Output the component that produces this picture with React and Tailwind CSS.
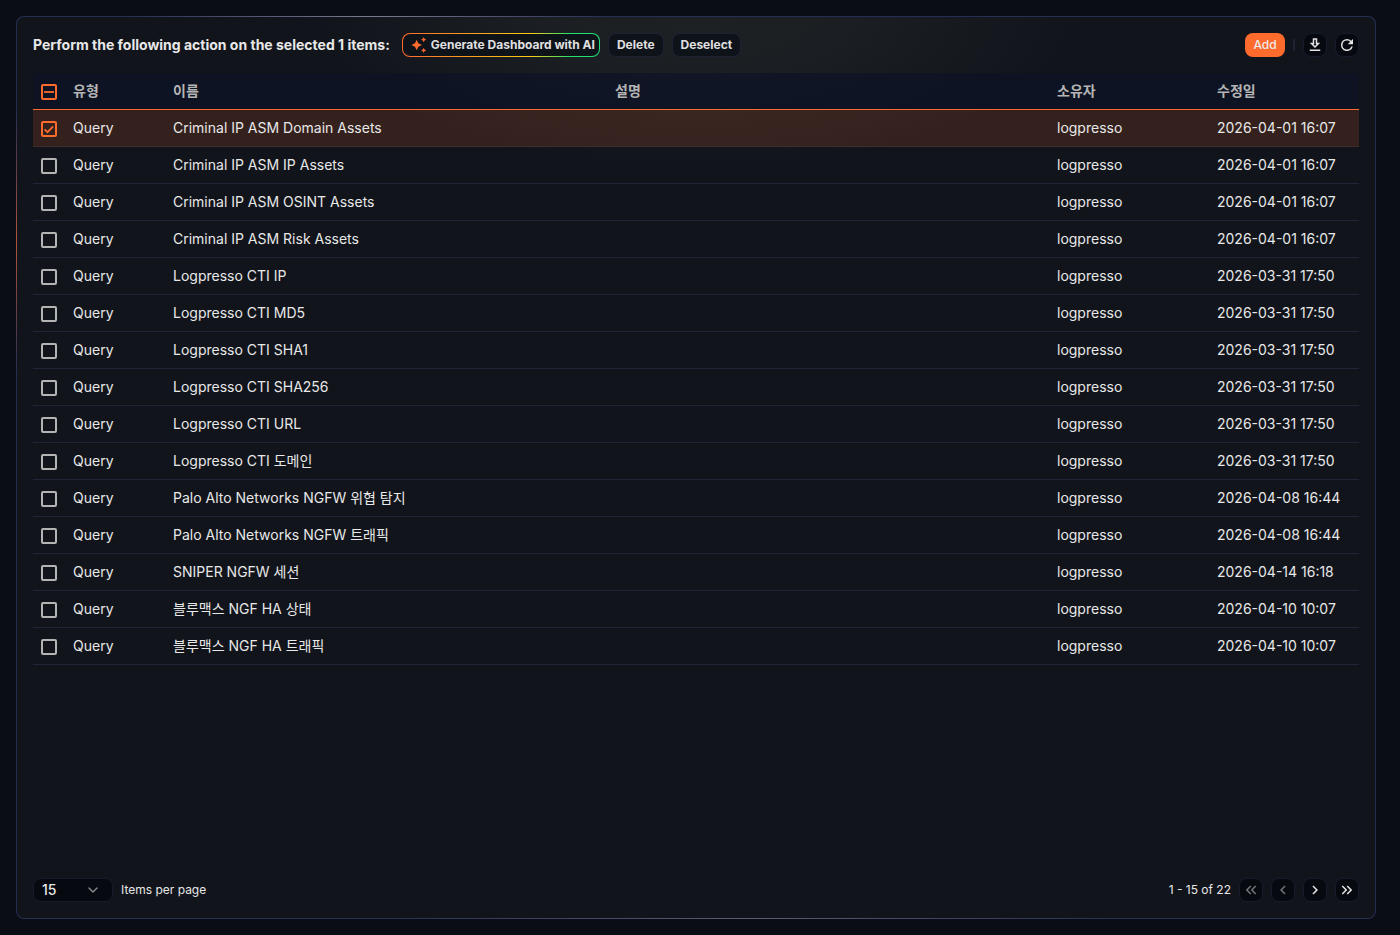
import React, { useEffect, useRef, useState } from 'react';
import clsx from 'clsx';
import { ChevronDown } from 'lucide-react';

const ROWS = [
  { id: 1, name: 'Criminal IP ASM Domain Assets', date: '2026-04-01 16:07' },
  { id: 2, name: 'Criminal IP ASM IP Assets', date: '2026-04-01 16:07' },
  { id: 3, name: 'Criminal IP ASM OSINT Assets', date: '2026-04-01 16:07' },
  { id: 4, name: 'Criminal IP ASM Risk Assets', date: '2026-04-01 16:07' },
  { id: 5, name: 'Logpresso CTI IP', date: '2026-03-31 17:50' },
  { id: 6, name: 'Logpresso CTI MD5', date: '2026-03-31 17:50' },
  { id: 7, name: 'Logpresso CTI SHA1', date: '2026-03-31 17:50' },
  { id: 8, name: 'Logpresso CTI SHA256', date: '2026-03-31 17:50' },
  { id: 9, name: 'Logpresso CTI URL', date: '2026-03-31 17:50' },
  { id: 10, name: 'Logpresso CTI 도메인', date: '2026-03-31 17:50' },
  { id: 11, name: 'Palo Alto Networks NGFW 위협 탐지', date: '2026-04-08 16:44' },
  { id: 12, name: 'Palo Alto Networks NGFW 트래픽', date: '2026-04-08 16:44' },
  { id: 13, name: 'SNIPER NGFW 세션', date: '2026-04-14 16:18' },
  { id: 14, name: '블루맥스 NGF HA 상태', date: '2026-04-10 10:07' },
  { id: 15, name: '블루맥스 NGF HA 트래픽', date: '2026-04-10 10:07' },
];

const Icon = ({ path, className }) => (
  <svg viewBox="0 0 24 24" fill="currentColor" aria-hidden="true" className={className}>
    <path d={path} />
  </svg>
);

const ICONS = {
  download: 'M19 9h-4V3H9v6H5l7 7 7-7zm-8 2V5h2v6h1.17L12 13.17 9.83 11H11zm-6 7h14v2H5v-2z',
  refresh:
    'M17.65 6.35A7.96 7.96 0 0 0 12 4a8 8 0 1 0 7.73 10h-2.08A6 6 0 1 1 12 6c1.66 0 3.14.69 4.22 1.78L13 11h7V4l-2.35 2.35z',
  first: 'M17.59 18 19 16.59 14.42 12 19 7.41 17.59 6l-6 6zM11 18l1.41-1.41L7.83 12l4.58-4.59L11 6l-6 6z',
  prev: 'M15.41 7.41 14 6l-6 6 6 6 1.41-1.41L10.83 12z',
  next: 'M10 6 8.59 7.41 13.17 12l-4.58 4.59L10 18l6-6z',
  last: 'M6.41 6 5 7.41 9.58 12 5 16.59 6.41 18l6-6zM13 6l-1.41 1.41L16.17 12l-4.58 4.59L13 18l6-6z',
  sparkle:
    'M8.5 4 11 9.5 16.5 12 11 14.5 8.5 20 6 14.5.5 12 6 9.5zM19 0l1.25 2.75L23 4l-2.75 1.25L19 8l-1.25-2.75L15 4l2.75-1.25zM19 16l1.25 2.75L23 20l-2.75 1.25L19 24l-1.25-2.75L15 20l2.75-1.25z',
};

const Checkbox = ({ label, checked, indeterminate = false, onChange }) => {
  const ref = useRef(null);
  const active = checked || indeterminate;

  useEffect(() => {
    ref.current.indeterminate = indeterminate;
  }, [indeterminate]);

  return (
    <span className="grid size-4">
      <input
        ref={ref}
        type="checkbox"
        aria-label={label}
        checked={checked}
        onChange={onChange}
        className={clsx(
          'col-start-1 row-start-1 size-4 appearance-none rounded-xs border-2',
          active ? 'border-[#ff6b2c]' : 'border-[#b4b4b4]'
        )}
      />
      {active && (
        <svg
          viewBox="0 0 16 16"
          fill="none"
          stroke="#ff6b2c"
          strokeWidth="1.8"
          className="pointer-events-none col-start-1 row-start-1 size-4"
        >
          <path d={indeterminate ? 'M3 8h10' : 'M3.6 8.4 6.5 11.2 12.2 5.4'} />
        </svg>
      )}
    </span>
  );
};

const BarButton = ({ children, onClick }) => (
  <button
    onClick={onClick}
    className="h-6 rounded-lg border border-[#1e2233] bg-[#0e1219] px-2 text-xs font-bold text-[#e0e0e0]"
  >
    {children}
  </button>
);

const IconButton = ({ icon, label, disabled }) => (
  <button
    aria-label={label}
    disabled={disabled}
    className="flex size-6 items-center justify-center rounded-lg border border-[#161b2c] bg-[#060910] text-[#e4e4e4] disabled:text-[#747679]"
  >
    <Icon path={ICONS[icon]} className="size-[18px] shrink-0" />
  </button>
);

const App = () => {
  const [selected, setSelected] = useState([1]);
  const [pageSize, setPageSize] = useState('15');

  const toggle = (id) =>
    setSelected((prev) => (prev.includes(id) ? prev.filter((x) => x !== id) : [...prev, id]));

  const allSelected = selected.length === ROWS.length;
  const toggleAll = () => setSelected(allSelected ? [] : ROWS.map((row) => row.id));

  return (
    <div className="flex min-h-screen bg-[#0a0d14] py-4 pr-6 pl-4 font-['Inter','Noto_Sans_CJK_KR',sans-serif] text-sm text-[#e8e8e8]">
      <main className="flex flex-1 flex-col rounded-lg border border-transparent p-4 [background:radial-gradient(380px_150px_at_50%_0,#1e2124,#1b1e22_40%,#11141b00)_padding-box,linear-gradient(#11141b,#11141b)_padding-box,radial-gradient(130px_130px_at_0_25%,#b3543a,transparent)_border-box,radial-gradient(240px_80px_at_26%_0,#7b7a90,transparent)_border-box,radial-gradient(380px_80px_at_54%_100%,#5b5b75,transparent)_border-box,linear-gradient(#262e54,#262e54)_border-box]">
        <header className="flex h-6 items-center gap-2">
          <h1 className="mr-1 font-bold">
            Perform the following action on the selected {selected.length} items:
          </h1>
          <button className="flex h-6 items-center gap-1 rounded-lg border border-transparent pr-1 pl-2 text-xs font-bold text-[#e0e0e0] [background:linear-gradient(#0e1219,#0e1219)_padding-box,linear-gradient(90deg,#ff6b2c,#facc15_65%,#22e06a_85%,#22e07a)_border-box]">
            <Icon path={ICONS.sparkle} className="size-4 text-[#ff6b2c]" />
            Generate Dashboard with AI
          </button>
          <BarButton>Delete</BarButton>
          <BarButton onClick={() => setSelected([])}>Deselect</BarButton>

          <div className="ml-auto flex items-center gap-2">
            <button className="h-6 w-10 rounded-lg bg-[#ff6b2c] text-xs font-medium text-[#ececec]">
              Add
            </button>
            <span className="h-3 w-0.5 bg-[#1e2235]" />
            <IconButton icon="download" label="Download" />
            <IconButton icon="refresh" label="Refresh" />
          </div>
        </header>

        <table className="mt-4 w-full table-fixed border-collapse text-left">
          <thead>
            <tr className="h-9 border-b border-[#ff6b2c] bg-[#0b1226]/70 text-[#b4b4b4]">
              <th className="w-8 pt-0.5 pl-2">
                <Checkbox
                  label="Select all"
                  checked={allSelected}
                  indeterminate={selected.length > 0 && !allSelected}
                  onChange={toggleAll}
                />
              </th>
              <th className="w-[100px] px-2 font-bold">유형</th>
              <th className="px-2 font-bold">이름</th>
              <th className="px-2 font-bold">설명</th>
              <th className="w-[160px] px-2 font-bold">소유자</th>
              <th className="w-[150px] px-2 font-bold">수정일</th>
            </tr>
          </thead>
          <tbody>
            {ROWS.map((row) => {
              const checked = selected.includes(row.id);
              return (
                <tr
                  key={row.id}
                  className={clsx(
                    'h-[37px] border-b',
                    checked ? 'border-[#3d2c32] bg-[#ff6b2c]/15' : 'border-[#20243a]'
                  )}
                >
                  <td className="pt-0.5 pl-2">
                    <Checkbox label={row.name} checked={checked} onChange={() => toggle(row.id)} />
                  </td>
                  <td className="px-2">Query</td>
                  <td className="truncate px-2">{row.name}</td>
                  <td className="px-2" />
                  <td className="px-2">logpresso</td>
                  <td className="px-2 whitespace-nowrap">{row.date}</td>
                </tr>
              );
            })}
          </tbody>
        </table>

        <footer className="mt-auto flex items-center justify-between text-xs">
          <div className="flex items-center gap-2">
            <span className="grid">
              <select
                id="page-size"
                value={pageSize}
                onChange={(e) => setPageSize(e.target.value)}
                className="col-start-1 row-start-1 h-6 w-20 appearance-none rounded-lg border border-[#161b2c] bg-[#060910] px-2 text-sm font-medium"
              >
                <option>15</option>
                <option>30</option>
                <option>50</option>
              </select>
              <ChevronDown className="pointer-events-none col-start-1 row-start-1 mr-3 size-4 self-center justify-self-end text-[#8b8d92]" />
            </span>
            <label htmlFor="page-size">Items per page</label>
          </div>
          <nav className="flex items-center gap-2">
            <span>1 - 15 of 22</span>
            <IconButton icon="first" label="First page" disabled />
            <IconButton icon="prev" label="Previous page" disabled />
            <IconButton icon="next" label="Next page" />
            <IconButton icon="last" label="Last page" />
          </nav>
        </footer>
      </main>
    </div>
  );
};

export default App;
